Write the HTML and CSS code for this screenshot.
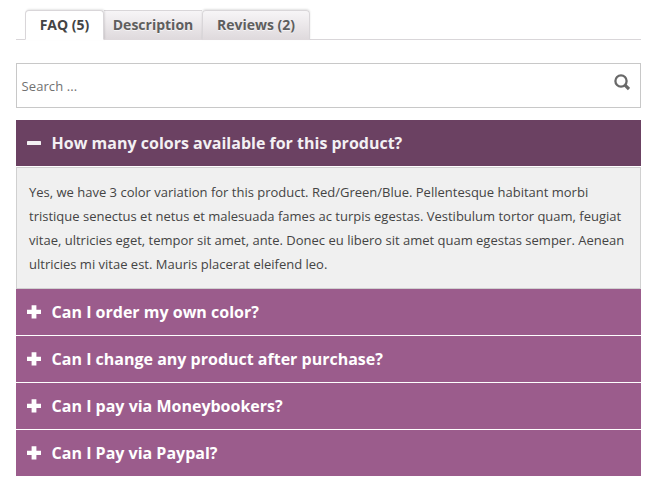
FILE: index.html
```html
<!DOCTYPE html>
<html lang="en">
<head>
<meta charset="utf-8">
<title>Product FAQ</title>
<link rel="stylesheet" href="styles.css">
</head>
<body>
<main class="product">
  <nav class="tabs">
    <a class="tab tab-active">FAQ (5)</a>
    <a class="tab tab-desc">Description</a>
    <a class="tab tab-reviews">Reviews (2)</a>
  </nav>
  <div class="search">
    <span class="search-text">Search ...</span>
    <svg class="search-icon" width="16" height="17" viewBox="0 0 16 17"><circle cx="7" cy="7" r="5.6" fill="none" stroke="#696969" stroke-width="2.3"/><path d="M11 11.1L15 15" stroke="#696969" stroke-width="3.2"/></svg>
  </div>
  <section class="faq">
    <h3 class="question question-open"><svg class="sign" width="14" height="14" viewBox="0 0 14 14"><rect y="5" width="14" height="4" rx=".6"/></svg><span>How many colors available for this product?</span></h3>
    <div class="answer">Yes, we have 3 color variation for this product. Red/Green/Blue. Pellentesque habitant morbi<br>tristique senectus et netus et malesuada fames ac turpis egestas. Vestibulum tortor quam, feugiat<br>vitae, ultricies eget, tempor sit amet, ante. Donec eu libero sit amet quam egestas semper. Aenean<br>ultricies mi vitae est. Mauris placerat eleifend leo.</div>
    <h3 class="question"><svg class="sign" width="14" height="14" viewBox="0 0 14 14"><path d="M4.6 .2h4.8v4.5H14v4.4H9.4v4.3H4.6V9.1H0V4.7h4.6z"/></svg><span>Can I order my own color?</span></h3>
    <h3 class="question"><svg class="sign" width="14" height="14" viewBox="0 0 14 14"><path d="M4.6 .2h4.8v4.5H14v4.4H9.4v4.3H4.6V9.1H0V4.7h4.6z"/></svg><span>Can I change any product after purchase?</span></h3>
    <h3 class="question"><svg class="sign" width="14" height="14" viewBox="0 0 14 14"><path d="M4.6 .2h4.8v4.5H14v4.4H9.4v4.3H4.6V9.1H0V4.7h4.6z"/></svg><span>Can I pay via Moneybookers?</span></h3>
    <h3 class="question"><svg class="sign" width="14" height="14" viewBox="0 0 14 14"><path d="M4.6 .2h4.8v4.5H14v4.4H9.4v4.3H4.6V9.1H0V4.7h4.6z"/></svg><span>Can I Pay via Paypal?</span></h3>
  </section>
</main>
</body>
</html>
```
FILE: styles.css
```css
* { box-sizing: border-box; }
body {
  margin: 0;
  background: #fff;
  font-family: "Open Sans", sans-serif;
  font-size: 13px;
  color: #444;
}
.product { width: 625px; margin-left: 16px; padding-top: 10px; }
.tabs {
  display: flex;
  height: 30px;
  padding-left: 9px;
  border-bottom: 1px solid #d9d6d9;
}
.tab {
  height: 30px;
  border: 1px solid #d9d6d9;
  border-bottom-color: #dfdadd;
  border-left-width: 0;
  border-radius: 4px 4px 0 0;
  background: linear-gradient(#f7f5f7, #dfdadd);
  color: #5e5e5e;
  font-size: 14px;
  font-weight: 700;
  line-height: 28px;
  text-align: center;
  text-shadow: 0 1px 0 rgba(255, 255, 255, .6);
}
.tab-active {
  width: 79px;
  border-left-width: 1px;
  border-bottom-color: #fff;
  background: #fff;
  color: #444;
  box-shadow: 1px -1px 2px rgba(0, 0, 0, .1);
  z-index: 1;
}
.tab-desc { width: 98px; border-radius: 0; border-right: 0; }
.tab-reviews { width: 108px; border-left-width: 1px; box-shadow: 0 -1px 2px rgba(0, 0, 0, .12); }
.search {
  display: flex;
  align-items: center;
  justify-content: space-between;
  height: 45px;
  margin-top: 23px;
  padding: 0 10px 0 4.5px;
  border: 1px solid #c8c8c8;
  color: #717171;
}
.search-text { letter-spacing: .1px; }
.search-icon { margin-bottom: 6px; }
.faq { margin-top: 12px; }
.question {
  display: flex;
  align-items: center;
  gap: 10.6px;
  height: 46px;
  margin: 0 0 1px;
  padding-left: 11px;
  background: #9b5c8c;
  color: #fff;
  font-size: 16px;
  font-weight: 700;
}
.question-open { background: #6b4162; color: #f3f0f3; }
.sign { fill: currentColor; }
.answer {
  height: 122px;
  padding: 12px;
  border: 1px solid #d0d0d0;
  background: #f0f0f0;
  line-height: 24px;
  white-space: nowrap;
}
```
